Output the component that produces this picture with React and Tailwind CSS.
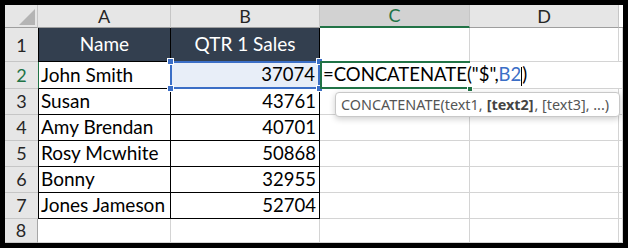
import React from 'react';

const cellFont = "font-['Lato','Liberation_Sans',sans-serif]";

const rows = [
  { n: 2, name: 'John Smith', sales: 37074 },
  { n: 3, name: 'Susan', sales: 43761 },
  { n: 4, name: 'Amy Brendan', sales: 40701 },
  { n: 5, name: 'Rosy Mcwhite', sales: 50868 },
  { n: 6, name: 'Bonny', sales: 32955 },
  { n: 7, name: 'Jones Jameson', sales: 52704 },
];

const Handle = ({ className }) => (
  <span className={`absolute w-[7px] h-[7px] bg-[#3b6ec6] border border-white ${className}`} />
);

const ColHeader = ({ label, active }) => (
  <div
    className={
      active
        ? 'flex items-center justify-center bg-[#d2d2d2] text-[#217346] border-r border-[#c6c6c6] border-b-2 border-b-[#217346] text-[18px]'
        : 'flex items-center justify-center bg-[#e6e6e6] text-[#262626] border-r border-[#c6c6c6] border-b border-b-[#9e9e9e] text-[18px]'
    }
  >
    {label}
  </div>
);

const RowHeader = ({ n, active, last, tall }) => (
  <div
    className={`flex justify-center bg-[#e6e6e6] border-b border-[#c6c6c6] text-[18px] ${
      tall ? 'items-end pb-[2px]' : 'items-center'
    } ${active ? 'text-[#217346]' : 'text-[#262626]'} ${last ? 'border-r border-r-[#a6a6a6]' : ''}`}
  >
    {n}
  </div>
);

const Grid = ({ children, className = '' }) => (
  <div className={`border-r border-b border-[#d4d4d4] ${className}`}>{children}</div>
);

export default function App() {
  return (
    <div className="w-[628px] h-[248px] bg-black p-[5px]">
      <div
        className={`relative grid h-full bg-white text-black ${cellFont} grid-cols-[33px_133px_149px_150px_149px_4px] grid-rows-[23px_34px_27px_26px_26px_26px_26px_26px_24px]`}
      >
        {/* column headers */}
        <div className="relative bg-[#e6e6e6] border-r border-[#c6c6c6] border-b border-b-[#9e9e9e]">
          <svg className="absolute right-[2px] bottom-[2px]" width="16" height="16" viewBox="0 0 16 16">
            <polygon points="16,0 16,16 0,16" fill="#b4b4b4" />
          </svg>
        </div>
        <ColHeader label="A" />
        <ColHeader label="B" />
        <ColHeader label="C" active />
        <ColHeader label="D" />
        <div className="bg-white border-b border-[#9e9e9e]" />

        {/* row 1: table headings */}
        <RowHeader n={1} tall />
        <div className="flex items-center justify-center bg-[#333f4f] text-white text-[19px] border-l border-black border-r border-b">
          Name
        </div>
        <div className="flex items-center justify-center bg-[#333f4f] text-white text-[19px] border-r border-b border-black">
          QTR 1 Sales
        </div>
        <Grid />
        <Grid />
        <Grid />

        {rows.map((r) => (
          <React.Fragment key={r.n}>
            <RowHeader n={r.n} active={r.n === 2} />
            <div
              className={`flex items-center pl-[2px] text-[19px] border-l border-r border-b border-black whitespace-nowrap ${
                r.n === 2 ? 'border-l-[#217346]' : ''
              }`}
            >
              {r.name}
            </div>
            {r.n === 2 ? (
              <div className="relative flex items-center justify-end pr-[4px] text-[18.5px] bg-[#e8eef8] border-r border-b border-black">
                <span className="absolute inset-[-1px] border-2 border-[#3b6ec6]" />
                <Handle className="-left-[4px] -top-[4px]" />
                <Handle className="-right-[4px] -top-[4px]" />
                <Handle className="-left-[4px] -bottom-[4px]" />
                <Handle className="-right-[4px] -bottom-[4px]" />
                <span className="relative">{r.sales}</span>
              </div>
            ) : (
              <div className="flex items-center justify-end pr-[3px] text-[18.5px] border-r border-b border-black">
                {r.sales}
              </div>
            )}
            {r.n === 2 ? (
              <div className="relative z-10 flex items-center border-b border-[#d4d4d4]">
                <span className="absolute left-0 -top-px right-0 -bottom-px border-2 border-r-0 border-[#217346]" />
                <span className="absolute -right-[3px] -bottom-[4px] w-[6px] h-[6px] bg-[#217346] border border-white" />
                <span className="relative pl-[3px] text-[18.5px] whitespace-nowrap">
                  =CONCATENATE("$",<span className="text-[#3b6ec6]">B2</span>
                  <span className="inline-block w-px h-[19px] bg-black align-middle" />)
                </span>
              </div>
            ) : (
              <Grid />
            )}
            {r.n === 2 ? <div className="border-b border-[#d4d4d4]" /> : <Grid />}
            <Grid />
          </React.Fragment>
        ))}

        {/* row 8 */}
        <RowHeader n={8} last />
        <Grid />
        <Grid />
        <Grid />
        <Grid />
        <Grid />

        {/* function argument tip */}
        <div className="absolute left-[330px] top-[87px] z-20 flex h-[25px] w-[285px] items-center rounded-[4px] border border-[#c8c8c8] bg-white pl-[5px] text-[14.4px] text-[#555] shadow-[0_2px_6px_rgba(0,0,0,0.2)] font-['Noto_Sans',sans-serif] whitespace-nowrap">
          CONCATENATE(text1, <b className="ml-[4px] mr-[1px] text-[#444]">[text2]</b>, [text3], ...)
        </div>
      </div>
    </div>
  );
}
